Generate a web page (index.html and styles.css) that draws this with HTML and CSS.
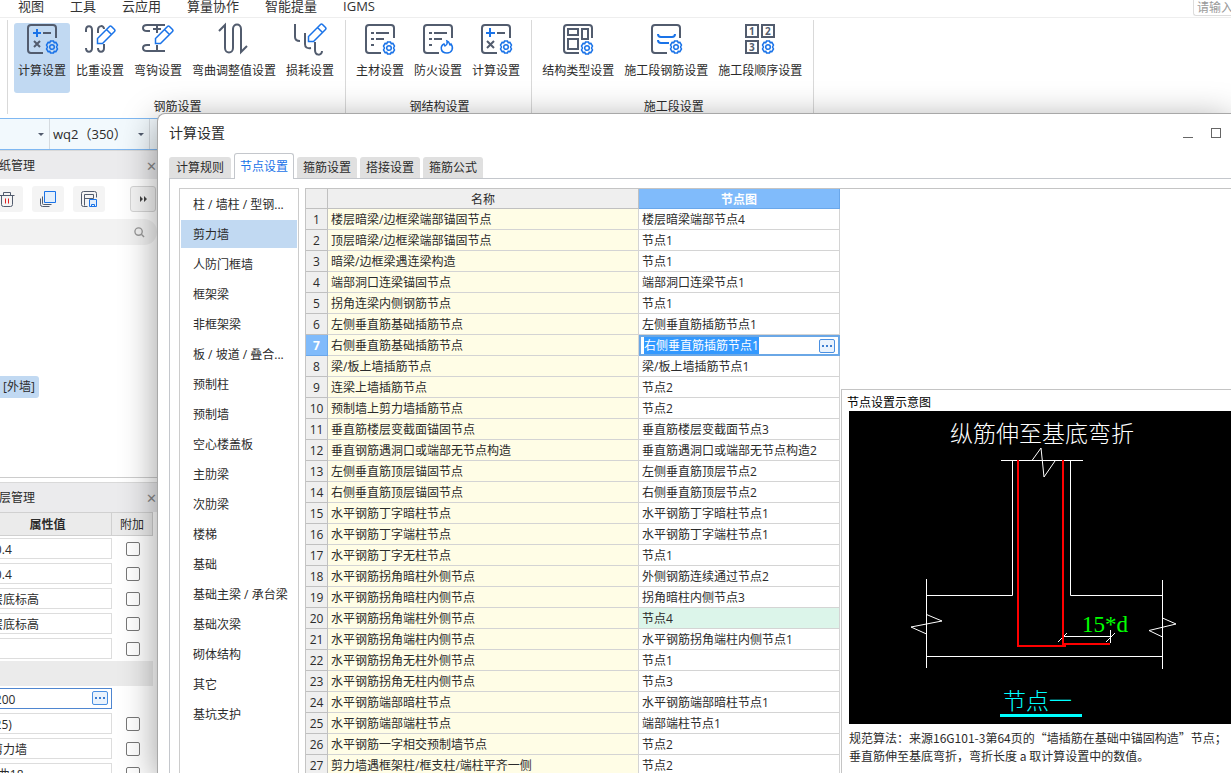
FILE: index.html
```html
<!DOCTYPE html>
<html lang="zh-CN">
<head>
    <meta charset="UTF-8">
    <meta name="viewport" content="width=device-width, initial-scale=1.0">
    <title>计算设置</title>
    <link rel="stylesheet" href="styles.css">
</head>
<body>

    <!-- Shared icon parts -->
    <svg class="sprite" aria-hidden="true">
        <symbol id="gear" viewBox="0 0 14 14">
            <path d="M5.5 1.1h3l.7 1.5 1.7-.2 1.6 2.6-1 2 1 2-1.6 2.6-1.7-.2-.7 1.5h-3l-.7-1.5-1.7.2L1.5 9l1-2-1-2 1.6-2.6 1.7.2z"/>
            <circle cx="7" cy="7" r="2.3"/>
        </symbol>
        <symbol id="pencil" viewBox="0 0 20 20">
            <path d="M1.5 18.5v-5L13.500 1.500q1-1 2 0l3 3q1 1 0 2L6.500 18.500zM10.500 4.500l5 5"/>
        </symbol>
    </svg>

    <nav class="menu-bar">
        <a href="#">视图</a>
        <a href="#">工具</a>
        <a href="#">云应用</a>
        <a href="#">算量协作</a>
        <a href="#">智能提量</a>
        <a href="#">IGMS</a>
        <input class="menu-search" type="text" placeholder="请输入" aria-label="搜索">
    </nav>

    <div class="ribbon">
        <section class="group">
            <div class="group-buttons">
                <button class="tool active">
                    <svg viewBox="0 0 30 30"><path d="M16 29H4q-3 0-3-3V4q0-3 3-3h22q3 0 3 3v10M16 9h8M7 17l6 6M13 17l-6 6"/><path class="blue" d="M6 9h8M10 5v8"/><use href="#gear" class="thin" x="18" y="16" width="14" height="14"/></svg>
                    计算设置
                </button>
                <button class="tool">
                    <svg viewBox="0 0 30 30"><path d="M1 8V6c0-5 6-5 6 0v18c0 5-6 5-6 0M13 9V6c0-5 6-5 6-1M19 20v4c0 5-6 5-6 0"/><use href="#pencil" class="thin" x="11" y="1" width="20" height="20"/></svg>
                    比重设置
                </button>
                <button class="tool">
                    <svg viewBox="0 0 30 30"><path d="M7 7H4q-4 0-4-3t4-3h18M14 1v8M10 5h8M14 21v6M7 21H4q-4 0-4 3t4 3h18"/><use href="#pencil" class="thin" x="11" y="1" width="20" height="20"/></svg>
                    弯钩设置
                </button>
                <button class="tool">
                    <svg viewBox="0 0 30 30"><path d="M0 7l6-6v23c0 6 8 6 8 0V5c0-6 8-6 8 0v23l6-6"/></svg>
                    弯曲调整值设置
                </button>
                <button class="tool">
                    <svg viewBox="0 0 30 30"><path d="M0 0v13q0 4 5 4M10 9v11q0 5 6 4M20 18v8c0 6 7 6 7 1"/><use href="#pencil" class="thin" x="12" y="-1" width="20" height="20"/></svg>
                    损耗设置
                </button>
            </div>
            <h2>钢筋设置</h2>
        </section>
        <section class="group">
            <div class="group-buttons">
                <button class="tool">
                    <svg viewBox="0 0 30 30"><path d="M16 29H4q-3 0-3-3V4q0-3 3-3h22q3 0 3 3v10M6 9h3M11 9h13M6 15h3M11 15h8M6 21h3"/><use href="#gear" class="thin" x="17" y="17" width="14" height="14"/></svg>
                    主材设置
                </button>
                <button class="tool">
                    <svg viewBox="0 0 30 30"><path d="M16 29H4q-3 0-3-3V4q0-3 3-3h22q3 0 3 3v10M6 9h3M11 9h13M6 15h3M11 15h8M6 21h3"/><path class="blue thin" d="M24 29c-7 0-7-7-3-9l1 2q3-2 2-5c3 1 2 3 3 4l1-1c3 4 1 9-4 9z"/></svg>
                    防火设置
                </button>
                <button class="tool">
                    <svg viewBox="0 0 30 30"><path d="M16 29H4q-3 0-3-3V4q0-3 3-3h22q3 0 3 3v10M16 9h8M6 17l7 7M13 17l-7 7"/><path class="blue" d="M5 9h9M9 4v9"/><use href="#gear" class="thin" x="18" y="16" width="14" height="14"/></svg>
                    计算设置
                </button>
            </div>
            <h2>钢结构设置</h2>
        </section>
        <section class="group">
            <div class="group-buttons">
                <button class="tool">
                    <svg viewBox="0 0 30 30"><path d="M16 29H4q-3 0-3-3V4q0-3 3-3h22q3 0 3 3v10M5 5h10v6H5zM19 5h6v10h-6zM5 15h10v10H5z"/><use href="#gear" class="thin" x="17" y="17" width="14" height="14"/></svg>
                    结构类型设置
                </button>
                <button class="tool">
                    <svg viewBox="0 0 30 30"><path d="M16 29H4q-3 0-3-3V4q0-3 3-3h22q3 0 3 3v10"/><path class="blue" d="M7 10q0 3 3 3h11q3 0 3-3M7 16q0 3 3 3h8"/><use href="#gear" class="thin" x="18" y="16" width="14" height="14"/></svg>
                    施工段钢筋设置
                </button>
                <button class="tool">
                    <svg viewBox="0 0 30 30"><path d="M1 1h12v12H1zM17 1h12v12H17zM1 17h12v12H1z"/><text x="4" y="11">1</text><text x="20" y="11">2</text><text x="4" y="27">3</text><use href="#gear" class="thin" x="16" y="16" width="14" height="14"/></svg>
                    施工段顺序设置
                </button>
            </div>
            <h2>施工段设置</h2>
        </section>
    </div>

    <div class="selector-bar">
        <label class="picker picker-floor"><select aria-label="楼层"><option></option></select></label>
        <label class="picker"><select aria-label="构件"><option>wq2（350）</option></select></label>
    </div>

    <aside class="dock">
        <div class="panel drawings">
            <header class="panel-title">图纸管理<button class="close" aria-label="关闭">✕</button></header>
            <div class="panel-tools">
                <button aria-label="删除"><svg viewBox="-0.5 -0.5 16 16"><path d="M0 4h15M4 4V1h7v3M2 4v9q0 2 2 2h7q2 0 2-2V4"/><path class="red" d="M6 7v5M9 7v5"/></svg></button>
                <button aria-label="复制"><svg viewBox="-0.5 -0.5 16 16"><path d="M2 5v7q0 1 1 1h8M0 7v6q0 2 2 2h7"/><path class="blue fill" d="M4 0h11v11H4z"/></svg></button>
                <button aria-label="保存"><svg viewBox="-0.5 -0.5 16 16"><path d="M6 15H2q-2 0-2-2V2q0-2 2-2h11q2 0 2 2v4M3 14V3h9v4M3 7h9"/><path class="blue fill" d="M8 8h7v7H8zM10 15v-2h3v2"/></svg></button>
                <button class="more" aria-label="更多"><svg viewBox="0 0 16 16"><path class="solid" d="M5 5l3 3-3 3zM9 5l3 3-3 3z"/></svg></button>
            </div>
            <label class="panel-search">
                <input type="text" aria-label="搜索图纸">
                <svg viewBox="0 0 12 12"><circle cx="5" cy="5" r="4"/><path d="M8 8l3 3"/></svg>
            </label>
            <span class="drawing-item">[外墙]</span>
        </div>

        <div class="panel layers">
            <header class="panel-title">图层管理<button class="close" aria-label="关闭">✕</button></header>
            <table class="props">
                <thead>
                    <tr><th>属性值</th><th>附加</th></tr>
                </thead>
                <tbody>
                    <tr><td><input type="text" value="-0.4" aria-label="起点顶标高"></td><td><input type="checkbox" aria-label="附加"></td></tr>
                    <tr><td><input type="text" value="-0.4" aria-label="终点顶标高"></td><td><input type="checkbox" aria-label="附加"></td></tr>
                    <tr><td><input type="text" value="层底标高" aria-label="起点底标高"></td><td><input type="checkbox" aria-label="附加"></td></tr>
                    <tr><td><input type="text" value="层底标高" aria-label="终点底标高"></td><td><input type="checkbox" aria-label="附加"></td></tr>
                    <tr><td><input type="text" value="" aria-label="备注"></td><td><input type="checkbox" aria-label="附加"></td></tr>
                    <tr class="section"><td></td><td></td></tr>
                    <tr class="current"><td><input type="text" value="-200" aria-label="厚度"><button class="dots" aria-label="选择"><i></i><i></i><i></i></button></td><td></td></tr>
                    <tr><td><input type="text" value="(25)" aria-label="保护层厚度"></td><td><input type="checkbox" aria-label="附加"></td></tr>
                    <tr><td><input type="text" value="剪力墙" aria-label="类别"></td><td><input type="checkbox" aria-label="附加"></td></tr>
                    <tr><td><input type="text" value="1曲18" aria-label="钢筋"></td><td><input type="checkbox" aria-label="附加"></td></tr>
                </tbody>
            </table>
        </div>
    </aside>

    <div class="dialog" role="dialog" aria-labelledby="dialog-title">
        <header class="dialog-title">
            <h1 id="dialog-title">计算设置</h1>
            <button class="minimize" aria-label="最小化"></button>
            <button class="maximize" aria-label="最大化"></button>
        </header>

        <div class="tabs">
            <button>计算规则</button>
            <button class="active">节点设置</button>
            <button>箍筋设置</button>
            <button>搭接设置</button>
            <button>箍筋公式</button>
        </div>

        <div class="tab-page">
            <ul class="category-list">
                <li>柱 / 墙柱 / 型钢...</li>
                <li class="active">剪力墙</li>
                <li>人防门框墙</li>
                <li>框架梁</li>
                <li>非框架梁</li>
                <li>板 / 坡道 / 叠合...</li>
                <li>预制柱</li>
                <li>预制墙</li>
                <li>空心楼盖板</li>
                <li>主肋梁</li>
                <li>次肋梁</li>
                <li>楼梯</li>
                <li>基础</li>
                <li>基础主梁 / 承台梁</li>
                <li>基础次梁</li>
                <li>砌体结构</li>
                <li>其它</li>
                <li>基坑支护</li>
            </ul>

            <div class="content">
                <table class="nodes">
                    <thead>
                        <tr><th></th><th>名称</th><th class="active">节点图</th></tr>
                    </thead>
                    <tbody id="node-rows">
                        <!-- Rows are filled in by the script below -->
                    </tbody>
                </table>

                <section class="preview">
                    <h3>节点设置示意图</h3>
                    <div class="drawing">
                        <svg viewBox="0 0 382 313">
                            <text class="caption" x="101" y="31">纵筋伸至基底弯折</text>
                            <g class="outline">
                                <path d="M152 49.500H234M183 49.500L192 37L195 66L206 50"/>
                                <path d="M163.500 49V184.500H77.500M221.500 49V184.500H313.500M77.500 245.500H313.500"/>
                                <path d="M77.500 168V257M313.500 169V258"/>
                                <path d="M77.500 203.500L93 210L62 216L77.500 223M313.500 207L327 213L300 219.500L313.500 226"/>
                                <path d="M214 225.500H262M261.500 219V232M209 231L218 222M257 231L266 222"/>
                            </g>
                            <path class="rebar" d="M169 49V235H217M214 49V233H261"/>
                            <text class="dimension" x="233" y="221">15*d</text>
                            <text class="name" x="154" y="298">节点一</text>
                            <path class="name-line" d="M151 304.500H233"/>
                        </svg>
                    </div>
                    <p>规范算法：来源16G101-3第64页的“墙插筋在基础中锚固构造”节点；<br>垂直筋伸至基底弯折，弯折长度 a 取计算设置中的数值。</p>
                </section>
            </div>
        </div>
    </div>

    <script>
        // Node settings: name, node drawing
        const nodes = [
            ["楼层暗梁/边框梁端部锚固节点", "楼层暗梁端部节点4"],
            ["顶层暗梁/边框梁端部锚固节点", "节点1"],
            ["暗梁/边框梁遇连梁构造", "节点1"],
            ["端部洞口连梁锚固节点", "端部洞口连梁节点1"],
            ["拐角连梁内侧钢筋节点", "节点1"],
            ["左侧垂直筋基础插筋节点", "左侧垂直筋插筋节点1"],
            ["右侧垂直筋基础插筋节点", "右侧垂直筋插筋节点1"],
            ["梁/板上墙插筋节点", "梁/板上墙插筋节点1"],
            ["连梁上墙插筋节点", "节点2"],
            ["预制墙上剪力墙插筋节点", "节点2"],
            ["垂直筋楼层变截面锚固节点", "垂直筋楼层变截面节点3"],
            ["垂直钢筋遇洞口或端部无节点构造", "垂直筋遇洞口或端部无节点构造2"],
            ["左侧垂直筋顶层锚固节点", "左侧垂直筋顶层节点2"],
            ["右侧垂直筋顶层锚固节点", "右侧垂直筋顶层节点2"],
            ["水平钢筋丁字暗柱节点", "水平钢筋丁字暗柱节点1"],
            ["水平钢筋丁字端柱节点", "水平钢筋丁字端柱节点1"],
            ["水平钢筋丁字无柱节点", "节点1"],
            ["水平钢筋拐角暗柱外侧节点", "外侧钢筋连续通过节点2"],
            ["水平钢筋拐角暗柱内侧节点", "拐角暗柱内侧节点3"],
            ["水平钢筋拐角端柱外侧节点", "节点4"],
            ["水平钢筋拐角端柱内侧节点", "水平钢筋拐角端柱内侧节点1"],
            ["水平钢筋拐角无柱外侧节点", "节点1"],
            ["水平钢筋拐角无柱内侧节点", "节点3"],
            ["水平钢筋端部暗柱节点", "水平钢筋端部暗柱节点1"],
            ["水平钢筋端部端柱节点", "端部端柱节点1"],
            ["水平钢筋一字相交预制墙节点", "节点2"],
            ["剪力墙遇框架柱/框支柱/端柱平齐一侧", "节点2"]
        ];
        const editingRow = 7;
        const changedRow = 20;

        function renderRows() {
            let html = "";
            nodes.forEach(([name, node], i) => {
                const number = i + 1;
                if (number === editingRow) {
                    html += `
                        <tr class="editing">
                            <th>${number}</th>
                            <td>${name}</td>
                            <td><div class="editor">
                                <input type="text" id="node-input" value="${node}" aria-label="节点图">
                                <button class="dots" aria-label="选择节点"><i></i><i></i><i></i></button>
                            </div></td>
                        </tr>`;
                } else {
                    html += `
                        <tr class="${number === changedRow ? "changed" : ""}">
                            <th>${number}</th>
                            <td>${name}</td>
                            <td>${node}</td>
                        </tr>`;
                }
            });
            document.getElementById("node-rows").innerHTML = html;
        }

        renderRows();
        document.getElementById("node-input").select();
    </script>

</body>
</html>
```
FILE: styles.css
```css
* {
    box-sizing: border-box;
}

body {
    margin: 0;
    height: 100vh;
    overflow: hidden;
    position: relative;
    display: flex;
    flex-direction: column;
    background: #fff;
    color: #2b2b2b;
    font-family: "Open Sans", "Noto Sans CJK SC", sans-serif;
    font-size: 12px;
    line-height: 16px;
}

button, input, select {
    font: inherit;
    color: inherit;
    margin: 0;
    padding: 0;
    border: none;
    background: none;
}

h1, h2, h3, p, ul {
    margin: 0;
    padding: 0;
    font-size: 12px;
    font-weight: normal;
}

.sprite {
    display: none;
}

/* Menu bar */
.menu-bar {
    display: flex;
    flex: none;
    gap: 26px;
    height: 18px;
    padding-left: 18px;
    border-bottom: 1px solid #eee;
    font-size: 13px;
    line-height: 12px;
}

.menu-bar a {
    color: #333;
    text-decoration: none;
}

.menu-search {
    width: 38px;
    height: 16px;
    margin-left: auto;
    padding-left: 3px;
    border: 1px solid #ddd;
    border-width: 0 0 1px 1px;
    border-radius: 0 0 0 3px;
    font-size: 12px;
}

.menu-search::placeholder {
    color: #999;
}

/* Ribbon */
.ribbon {
    display: flex;
    flex: none;
    height: 96px;
    padding: 2px 0 0 7px;
}

.group {
    padding: 3px 7px 0 6px;
    border-left: 1px solid #d9d9d9;
    text-align: center;
}

.group:last-child {
    border-right: 1px solid #d9d9d9;
}

.group-buttons {
    display: flex;
    gap: 2px;
}

.group h2 {
    margin-top: 6px;
    padding-left: 3px;
}

.tool {
    display: flex;
    flex-direction: column;
    align-items: center;
    gap: 9px;
    height: 70px;
    padding: 1px 4px 0;
    border-radius: 3px;
}

.tool.active {
    background: #c1d9f2;
}

.tool svg {
    width: 30px;
    height: 30px;
    overflow: visible;
    fill: none;
    stroke: #525c6e;
    stroke-width: 2;
}

.tool svg text {
    fill: #525c6e;
    stroke: none;
    font-size: 10px;
    font-weight: bold;
}

.tool svg .blue {
    stroke: #1a73e8;
}

.tool svg .thin {
    stroke: #1a73e8;
    stroke-width: 1.5;
}

/* Floor and component pickers */
.selector-bar {
    display: flex;
    flex: none;
    height: 32px;
    margin-top: 4px;
    border-top: 1px solid #7fb8f2;
    border-bottom: 1px solid #7fb8f2;
    background: #f2f9fd;
}

.picker {
    position: relative;
    width: 100px;
    border-right: 1px solid #d5dbe0;
}

.picker-floor {
    width: 50px;
}

.picker select {
    width: 100%;
    height: 100%;
    padding-left: 3px;
    appearance: none;
    font-size: 13px;
}

.picker::after {
    content: "";
    position: absolute;
    top: 14px;
    right: 5px;
    border: 3px solid transparent;
    border-top-color: #525c6e;
}

/* Docked panels, partly scrolled off the left edge */
.dock {
    display: flex;
    flex: 1;
    flex-direction: column;
    width: 180px;
    min-height: 0;
    margin-left: -20px;
}

.panel-title {
    display: flex;
    justify-content: space-between;
    align-items: center;
    height: 29px;
    padding: 1px 3px 0 7px;
    border-top: 1px solid #d9d9d9;
    background: #ebebed;
}

.close {
    width: 12px;
    color: #888;
    font-size: 13px;
}

.drawings {
    flex: none;
    height: 328px;
    border-bottom: 1px solid #ccc;
}

.panel-tools {
    display: flex;
    gap: 9px;
    padding: 7px 4px 7px 11px;
}

.panel-tools button {
    display: flex;
    align-items: center;
    justify-content: center;
    width: 32px;
    height: 26px;
    border-radius: 3px;
    background: #f4f4f4;
}

.panel-tools .more {
    width: 26px;
    margin-left: auto;
    border: 1px solid #d5d5d5;
}

.panel-tools svg {
    width: 16px;
    height: 16px;
    fill: none;
    stroke: #525c6e;
}

.panel-tools .red {
    stroke: #e02020;
}

.panel-tools .blue {
    stroke: #1a73e8;
}

.panel-tools .fill {
    fill: #e3effc;
}

.panel-tools .solid {
    fill: #444;
    stroke: none;
}

.panel-search {
    display: flex;
    align-items: center;
    height: 26px;
    margin-right: 3px;
    padding-right: 12px;
    border-radius: 13px;
    background: #f2f2f2;
}

.panel-search input {
    flex: 1;
    min-width: 0;
}

.panel-search svg {
    width: 11px;
    height: 11px;
    fill: none;
    stroke: #999;
    stroke-width: 1.5;
}

.drawing-item {
    display: inline-block;
    margin-top: 131px;
    padding: 3px 4px 3px 23px;
    border-radius: 3px;
    background: #c1d9f2;
}

.layers {
    margin-top: 4px;
}

.layers .panel-title {
    height: 30px;
}

/* Property table */
.props {
    width: 173px;
    border-spacing: 0;
    table-layout: fixed;
}

.props th {
    height: 24px;
    padding: 2px 0 0;
    border: 1px solid #d0d0d0;
    border-width: 1px 1px 1px 0;
    background: #ebebeb;
}

.props th:first-child {
    padding-left: 4px;
}

.props th:last-child {
    width: 41px;
    font-weight: normal;
}

.props td {
    position: relative;
    height: 25px;
    padding: 0;
    text-align: center;
}

.props input[type="text"] {
    display: block;
    width: 100%;
    height: 21px;
    padding: 1px 10px 0;
    border: 1px solid #ddd;
}

.props input[type="checkbox"] {
    display: block;
    width: 14px;
    height: 14px;
    margin: 0 auto;
    border: 1px solid #777;
    border-radius: 2px;
    background: #fff;
    appearance: none;
}

.props .section td {
    background: #ebebeb;
}

.props .current input[type="text"] {
    border-color: #4f86d0;
}

.dots {
    display: flex;
    align-items: center;
    justify-content: center;
    gap: 2px;
    width: 16px;
    height: 14px;
    border: 1px solid #4a90e2;
    border-radius: 2px;
    background: #eaf3fd;
}

.dots i {
    width: 2px;
    height: 2px;
    background: #3c7dd0;
}

.props .dots {
    position: absolute;
    top: 5px;
    right: 4px;
}

/* Dialog window */
.dialog {
    position: absolute;
    top: 113px;
    left: 157px;
    right: 0;
    bottom: 0;
    display: flex;
    flex-direction: column;
    overflow: hidden;
    border: 1px solid #a8a8a8;
    border-width: 1px 0 0 1px;
    border-radius: 8px 0 0 0;
    background: #fff;
    box-shadow: 0 8px 36px rgba(0, 0, 0, 0.4);
}

.dialog-title {
    display: flex;
    flex: none;
    align-items: center;
    gap: 18px;
    height: 37px;
    padding: 0 10px 0 11px;
}

.dialog-title h1 {
    flex: 1;
    font-size: 14px;
}

.dialog-title button {
    width: 10px;
    height: 10px;
    border: 1px solid #666;
}

.dialog-title .minimize {
    border-width: 0 0 1px;
}

/* Tabs */
.tabs {
    position: relative;
    z-index: 1;
    display: flex;
    flex: none;
    align-items: flex-end;
    gap: 3px;
    height: 28px;
    margin: 0 0 -1px 11px;
}

.tabs button {
    height: 21px;
    margin-bottom: 1px;
    padding: 0 6px;
    border-radius: 3px 3px 0 0;
    background: #e0e0e0;
}

.tabs button:first-child {
    padding: 0 7px;
}

.tabs .active {
    height: 26px;
    margin-bottom: 0;
    padding: 0 5px;
    border: 1px solid #c4c7cc;
    border-bottom: none;
    background: #fff;
    color: #1a73e8;
}

.tab-page {
    display: flex;
    flex: 1;
    gap: 6px;
    min-height: 0;
    margin-left: 11px;
    padding: 9px 0 0 9px;
    border: 1px solid #c4c7cc;
    border-width: 1px 0 0 1px;
}

.category-list {
    display: flex;
    flex: none;
    flex-direction: column;
    gap: 2px;
    width: 120px;
    padding: 1px;
    border: 1px solid #ccc;
    border-bottom: none;
    list-style: none;
}

.category-list li {
    flex: none;
    padding: 7px 0 5px 12px;
    white-space: nowrap;
}

.category-list .active {
    background: #c1d9f2;
}

/* Node table and its drawing */
.content {
    display: flex;
    flex: 1;
    align-items: flex-start;
    gap: 1px;
    min-width: 0;
    border-top: 1px solid #c4c4c4;
}

.nodes {
    flex: none;
    width: 535px;
    border-left: 1px solid #c4c4c4;
    border-spacing: 0;
    table-layout: fixed;
}

.nodes th,
.nodes td {
    height: 21px;
    padding: 2px 0 0;
    border-right: 1px solid #d4d4d4;
    border-bottom: 1px solid #d4d4d4;
    line-height: 18px;
    white-space: nowrap;
}

.nodes th {
    border-color: #c0c0c0;
    background: #efefef;
    font-weight: normal;
}

.nodes thead th {
    height: 20px;
    line-height: 17px;
}

.nodes thead th:first-child {
    width: 22px;
}

.nodes thead .active {
    width: 201px;
    border-color: #6aa7ea;
    background: #80bbfb;
    color: #fff;
    font-weight: bold;
}

.nodes td {
    padding-left: 3px;
    background: #fffde6;
}

.nodes td:last-child {
    background: #fff;
}

.nodes .changed td:last-child {
    background: #dcf5ea;
}

.nodes .editing th {
    border-color: #6aa7ea;
    background: #80bbfb;
    color: #fff;
    font-weight: bold;
}

.nodes .editing td:last-child {
    padding: 0;
    border: none;
}

.editor {
    display: flex;
    align-items: center;
    height: 21px;
    padding: 0 3px;
    border: 2px solid #6aa7e6;
}

.editor input {
    flex: 1;
    min-width: 0;
    height: 17px;
    outline: none;
}

.editor input::selection {
    background: #3399ff;
    color: #fff;
}

.preview {
    flex: 1;
    min-width: 0;
    height: 400px;
    margin-top: 200px;
    padding: 4px 0 0 7px;
    border: 1px solid #c4c4c4;
    border-width: 1px 0 0 1px;
    overflow: hidden;
    white-space: nowrap;
}

.preview h3 {
    margin-left: -2px;
    color: #000;
    line-height: 17px;
}

.drawing {
    background: #000;
}

.drawing svg {
    display: block;
    width: 382px;
    height: 313px;
    fill: none;
}

.drawing text {
    font-size: 23px;
    font-weight: 300;
}

.caption {
    fill: #fff;
}

.outline {
    stroke: #fff;
}

.rebar {
    stroke: #f00;
    stroke-width: 2;
}

.dimension {
    fill: #0f0;
    font-family: "Liberation Serif", serif;
}

.name {
    fill: #0ff;
}

.name-line {
    stroke: #0ff;
    stroke-width: 3;
}

.preview p {
    padding-top: 5px;
    font-family: "Noto Sans CJK SC", sans-serif;
    line-height: 18px;
}
```
